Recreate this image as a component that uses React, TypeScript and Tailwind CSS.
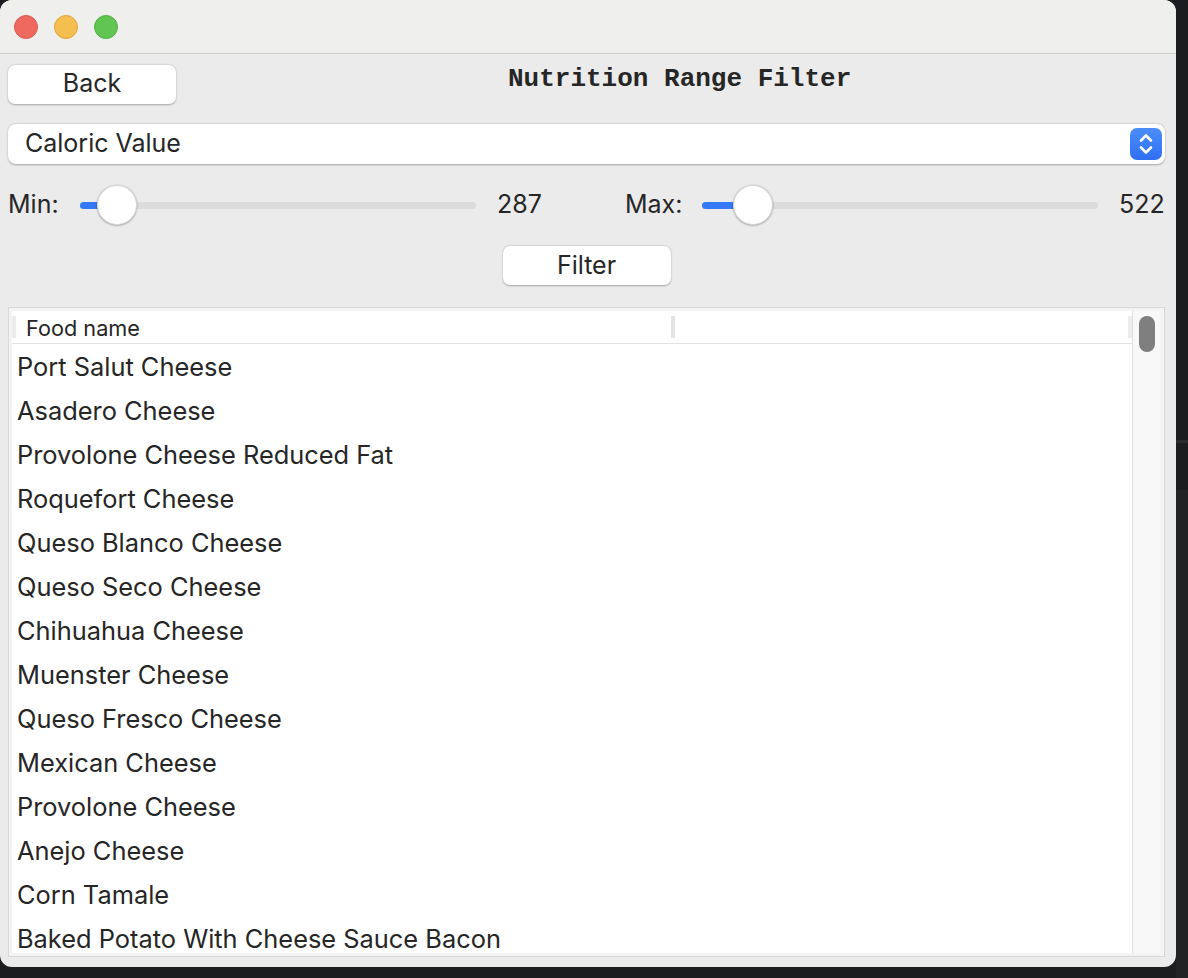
import React from "react";

const foods = [
  "Port Salut Cheese",
  "Asadero Cheese",
  "Provolone Cheese Reduced Fat",
  "Roquefort Cheese",
  "Queso Blanco Cheese",
  "Queso Seco Cheese",
  "Chihuahua Cheese",
  "Muenster Cheese",
  "Queso Fresco Cheese",
  "Mexican Cheese",
  "Provolone Cheese",
  "Anejo Cheese",
  "Corn Tamale",
  "Baked Potato With Cheese Sauce Bacon",
];

function Slider({ label, thumb, labelW }: { label: string; thumb: number; labelW: string }) {
  return (
    <div className="flex items-center">
      <span className={`${labelW} text-[25px]`}>{label}</span>
      <div className="relative h-[40px] w-[396px]">
        <div className="absolute left-0 right-0 top-[17px] h-[7px] rounded-full bg-[#dcdcdc]" />
        <div className="absolute left-0 top-[17px] h-[7px] rounded-full bg-[#3478f6]" style={{ width: thumb }} />
        <div
          className="absolute top-0 h-[40px] w-[40px] rounded-full bg-white shadow-[0_0.5px_2px_rgba(0,0,0,0.35)] border border-[#d6d6d6]"
          style={{ left: thumb - 20 }}
        />
      </div>
    </div>
  );
}

export default function App() {
  return (
    <div className="flex h-[978px] w-[1188px] bg-[#1c1d1f] text-[#262626]" style={{ fontFamily: "Inter, 'Noto Sans', sans-serif" }}>
      <div className="flex h-[967px] w-[1176px] flex-col overflow-hidden rounded-[12px] bg-[#ebebeb]">
        {/* titlebar */}
        <div className="flex h-[54px] shrink-0 items-center gap-[16px] border-b border-[#cfcfcf] bg-[#efefed] pl-[14px]">
          <div className="h-[24px] w-[24px] rounded-full border border-[#de5a50] bg-[#ee6a5f]" />
          <div className="h-[24px] w-[24px] rounded-full border border-[#dea53a] bg-[#f5bf4f]" />
          <div className="h-[24px] w-[24px] rounded-full border border-[#4eb043] bg-[#61c554]" />
        </div>
        {/* content */}
        <div className="flex flex-1 flex-col pl-[8px] pr-[11px] pt-[10px]">
          <div className="flex h-[40px] items-center">
            <button className="h-[39px] w-[168px] rounded-[7px] bg-white text-[25px] shadow-[0_0.5px_2px_rgba(0,0,0,0.3)]">
              Back
            </button>
            <div
              className="ml-[332px] -mt-[10px] text-[26px] font-bold"
              style={{ fontFamily: "'Liberation Mono', 'Courier New', monospace" }}
            >
              Nutrition Range Filter
            </div>
          </div>
          <div className="mt-[20px] flex h-[40px] items-center justify-between rounded-[8px] bg-white pl-[17px] pr-[3px] shadow-[0_0.5px_2px_rgba(0,0,0,0.3)]">
            <span className="text-[25px]">Caloric Value</span>
            <div className="flex h-[32px] w-[32px] items-center justify-center rounded-[7px] bg-gradient-to-b from-[#4b8ef8] to-[#2f6ff2]">
              <svg width="16" height="26" viewBox="0 0 16 26" fill="none" stroke="white" strokeWidth="2.6" strokeLinecap="round" strokeLinejoin="round">
                <path d="M3 9.5 L8 4.5 L13 9.5" />
                <path d="M3 16.5 L8 21.5 L13 16.5" />
              </svg>
            </div>
          </div>
          <div className="mt-[21px] flex h-[40px] items-center">
            <Slider label="Min:" thumb={37} labelW="w-[72px]" />
            <span className="ml-[21px] w-[128px] text-[25px]">287</span>
            <Slider label="Max:" thumb={51} labelW="w-[77px]" />
            <span className="ml-[21px] text-[25px]">522</span>
          </div>
          <div className="mt-[21px] flex justify-center">
            <button className="h-[39px] w-[168px] rounded-[7px] bg-white text-[25px] shadow-[0_0.5px_2px_rgba(0,0,0,0.3)]">
              Filter
            </button>
          </div>
          {/* table */}
          <div className="mt-[22px] flex h-[650px] border border-[#d8d8d8] bg-[#f3f3f3] p-[3px] pr-[4px]">
            <div className="flex flex-1 flex-col overflow-hidden bg-white">
              <div className="flex h-[33px] shrink-0 items-center border-b border-[#e2e2e2]">
                <div className="h-[22px] w-[4px] bg-[#ececec]" />
                <span className="ml-[10px] mt-[2px] w-[645px] text-[21.7px]">Food name</span>
                <div className="h-[22px] w-[4px] bg-[#e4e4e4]" />
                <div className="flex-1" />
                <div className="h-[22px] w-[4px] bg-[#ececec]" />
              </div>
              <div className="flex flex-col pt-[1px]">
                {foods.map((f) => (
                  <div key={f} className="flex h-[44px] shrink-0 items-center pl-[5px] text-[25.4px]">
                    {f}
                  </div>
                ))}
              </div>
            </div>
            <div className="flex w-[28px] justify-center border-l border-[#e0e0e0] bg-[#f8f8f8] pt-[5px]">
              <div className="h-[36px] w-[16px] rounded-full bg-[#7f7f7f]" />
            </div>
          </div>
        </div>
      </div>
      <div className="flex flex-1 flex-col">
        <div className="h-[440px]" />
        <div className="h-[3px] bg-[#2b2c2e]" />
        <div className="h-[47px]" />
        <div className="flex-1 bg-[#222325]" />
      </div>
    </div>
  );
}
